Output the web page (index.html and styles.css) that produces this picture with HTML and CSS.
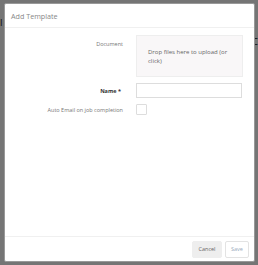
FILE: index.html
```html
<!DOCTYPE html>
<html lang="en">
<head>
    <meta charset="UTF-8">
    <meta name="viewport" content="width=device-width, initial-scale=1.0">
    <title>Add Template</title>
    <link rel="stylesheet" href="styles.css">
</head>
<body>
    <div class="page">
        <span class="page-left">I</span>
        <span class="page-right">C</span>
    </div>

    <div class="overlay">
        <div class="modal">
            <div class="modal-header">Add Template</div>

            <div class="modal-body">
                <div class="row">
                    <label class="label">Document</label>
                    <div class="dropzone">Drop files here to upload (or click)</div>
                </div>
                <div class="row row-center">
                    <label class="label label-bold">Name *</label>
                    <input type="text" class="field">
                </div>
                <div class="row row-center">
                    <label class="label">Auto Email on job completion</label>
                    <span class="check"></span>
                </div>
            </div>

            <div class="modal-footer">
                <button class="btn btn-cancel">Cancel</button>
                <button class="btn btn-save">Save</button>
            </div>
        </div>
    </div>
</body>
</html>
```

FILE: styles.css
```css
body {
    margin: 0;
    font-family: "Open Sans", sans-serif;
    background: #fff;
}

.page {
    height: 265px;
    position: relative;
    font-size: 9px;
    color: #111;
}

.page-left {
    position: absolute;
    left: 0;
    top: 16px;
}

.page-right {
    position: absolute;
    right: 0;
    top: 35px;
}

.overlay {
    position: fixed;
    inset: 0;
    background: rgba(0, 0, 0, 0.54);
    padding: 3px 4px 3px 4px;
    box-sizing: border-box;
    display: flex;
}

.modal {
    flex: 1;
    background: #fff;
    border: 1px solid #999;
    border-radius: 2px;
    display: flex;
    flex-direction: column;
}

.modal-header {
    height: 23px;
    padding-left: 6px;
    display: flex;
    align-items: center;
    font-size: 7.2px;
    color: #888;
    border-bottom: 1px solid #f0f0f0;
}

.modal-body {
    flex: 1;
    padding: 7px 11px 0 0;
    display: flex;
    flex-direction: column;
    gap: 6px;
}

.row {
    display: flex;
    gap: 13px;
}

.row-center {
    align-items: center;
}

.label {
    width: 118px;
    box-sizing: border-box;
    text-align: right;
    font-size: 5.5px;
    color: #777;
    padding-top: 5px;
}

.row-center .label {
    padding-top: 0;
}

.label-bold {
    font-weight: bold;
    color: #333;
    padding-right: 2px;
}

.dropzone {
    width: 84px;
    height: 28px;
    padding: 7px 10px 5px 11px;
    background: #f9f7f8;
    border: 1px solid #eee;
    font-size: 6px;
    line-height: 9px;
    color: #666;
    display: flex;
    align-items: center;
}

.field {
    width: 106px;
    height: 15px;
    box-sizing: border-box;
    border: 1px solid #ddd;
    margin: 0;
    padding: 0;
}

.check {
    width: 9px;
    height: 9px;
    border: 1px solid #ddd;
    border-radius: 1px;
}

.modal-footer {
    height: 24px;
    border-top: 1px solid #f0f0f0;
    display: flex;
    justify-content: flex-end;
    align-items: center;
    gap: 3px;
    padding-right: 5px;
}

.btn {
    height: 17px;
    font-family: "Open Sans", sans-serif;
    font-size: 5.5px;
    border-radius: 2px;
    padding: 0 5px;
}

.btn-cancel {
    width: 30px;
    background: #eee;
    border: 1px solid #eee;
    color: #666;
}

.btn-save {
    width: 24px;
    background: #fff;
    border: 1px solid #e3e3e3;
    color: #9ab;
}
```
